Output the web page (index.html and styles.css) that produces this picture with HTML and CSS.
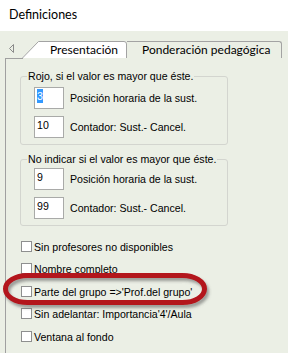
FILE: index.html
```html
<!DOCTYPE html>
<html lang="es">
<head>
<meta charset="utf-8">
<title>Definiciones</title>
<link rel="stylesheet" href="styles.css">
</head>
<body>
<div class="titlebar">Definiciones</div>
<div class="tabrow">
  <svg class="arrow" width="5" height="9" viewBox="0 0 5 9"><path d="M4.5 0.5 L0.5 4.5 L4.5 8.5 Z" fill="none" stroke="#8a8a8a" stroke-width="1"/></svg>
  <div class="tab tab-active">
    <svg class="tab-bg" width="105" height="17" viewBox="0 0 105 17"><path d="M0 17 L16.5 0.5 L102 0.5 Q104.5 0.5 104.5 3 L104.5 17 Z" fill="#fff"/><path d="M0 17.5 L16.5 0.5 L102 0.5 Q104.5 0.5 104.5 3 L104.5 17" fill="none" stroke="#a3a3a3" stroke-width="1"/></svg>
    <span class="tab-label">Presentación</span>
  </div>
  <div class="tab tab-inactive"><span class="tab-label">Ponderación pedagógica</span></div>
</div>
<div class="panel">
  <fieldset class="group group-1">
    <legend>Rojo, si el valor es mayor que éste.</legend>
    <div class="field-row"><span class="input"><span class="sel">3</span></span><span class="field-label">Posición horaria de la sust.</span></div>
    <div class="field-row"><span class="input">10</span><span class="field-label">Contador: Sust.- Cancel.</span></div>
  </fieldset>
  <fieldset class="group group-2">
    <legend>No indicar si el valor es mayor que éste.</legend>
    <div class="field-row"><span class="input">9</span><span class="field-label">Posición horaria de la sust.</span></div>
    <div class="field-row"><span class="input">99</span><span class="field-label">Contador: Sust.- Cancel.</span></div>
  </fieldset>
  <div class="checks">
    <div class="check-row"><span class="box"></span><span>Sin profesores no disponibles</span></div>
    <div class="check-row"><span class="box"></span><span>Nombre completo</span></div>
    <div class="check-row"><span class="box"></span><span>Parte del grupo =&gt;'Prof.del grupo'</span></div>
    <div class="check-row"><span class="box"></span><span>Sin adelantar: Importancia'4'/Aula</span></div>
    <div class="check-row"><span class="box"></span><span>Ventana al fondo</span></div>
  </div>
</div>
<svg class="highlight" width="220" height="50" viewBox="0 0 220 50">
  <defs>
    <filter id="sh" x="-10%" y="-30%" width="120%" height="170%">
      <feDropShadow dx="2" dy="3" stdDeviation="1.5" flood-color="#555" flood-opacity="0.55"/>
    </filter>
  </defs>
  <rect x="5.5" y="7.5" width="199" height="27" rx="22" ry="13.5" fill="none" stroke="#b3131b" stroke-width="5" filter="url(#sh)"/>
</svg>
</body>
</html>
```
FILE: styles.css
```css
* { box-sizing: border-box; }
html, body { margin: 0; padding: 0; }
body {
  width: 288px;
  height: 353px;
  overflow: hidden;
  position: relative;
  background: #ebefe5;
  font-family: "Liberation Sans", Arial, sans-serif;
  font-size: 10.6px;
  color: #000;
}
.titlebar {
  height: 31px;
  background: #fff;
  font-family: Lato, sans-serif;
  font-size: 12.5px;
  line-height: 30px;
  padding-left: 9px;
}
.tabrow {
  height: 27px;
  display: flex;
  align-items: flex-end;
}
.arrow {
  align-self: flex-start;
  margin: 13px 8px 0 9px;
  display: block;
}
.tab {
  height: 17px;
  font-family: Lato, sans-serif;
  font-size: 12px;
  line-height: 17px;
  white-space: nowrap;
}
.tab-active {
  width: 105px;
  position: relative;
  padding-left: 28px;
}
.tab-bg {
  position: absolute;
  left: 0;
  top: 0;
  display: block;
}
.tab-label { position: relative; }
.tab-inactive {
  width: 155px;
  border: 1px solid #a3a3a3;
  border-left: none;
  border-bottom: none;
  border-radius: 0 3px 0 0;
  padding-left: 15px;
  line-height: 16px;
}
.panel {
  height: 300px;
  border-left: 1px solid #a0a0a0;
  margin-left: 5px;
  background: linear-gradient(#a0a0a0, #a0a0a0) no-repeat 0 0 / 17px 1px;
  padding: 11px 0 0 14px;
}
.group {
  width: 208px;
  margin: 0;
  border: 1px solid #d3d5cf;
  border-radius: 3px;
  padding: 4px 0 6px 6px;
  min-width: 0;
}
.group-2 { margin-top: 7px; padding-top: 2px; }
.group legend {
  padding: 0 1px;
  line-height: 14px;
  height: 14px;
}
.field-row {
  display: flex;
  align-items: center;
  margin-left: 7px;
  height: 22px;
}
.field-row + .field-row { margin-top: 7px; }
.input {
  width: 30px;
  height: 22px;
  background: #fff;
  border: 1px solid #a9aaa8;
  padding: 1px 2px;
  line-height: 14px;
  align-self: flex-start;
}
.sel {
  background: #3399ff;
  color: #fff;
  display: inline-block;
}
.field-label { margin-left: 6px; }
.checks {
  margin-top: 15px;
  margin-left: 1px;
  display: flex;
  flex-direction: column;
}
.check-row {
  height: 22.4px;
  display: flex;
  align-items: flex-start;
  line-height: 12px;
}
.box {
  width: 11px;
  height: 11px;
  border: 1px solid #8e8f8f;
  background: #fff;
  margin-right: 2px;
}
.highlight {
  position: absolute;
  left: 0;
  top: 268px;
  display: block;
}
```
